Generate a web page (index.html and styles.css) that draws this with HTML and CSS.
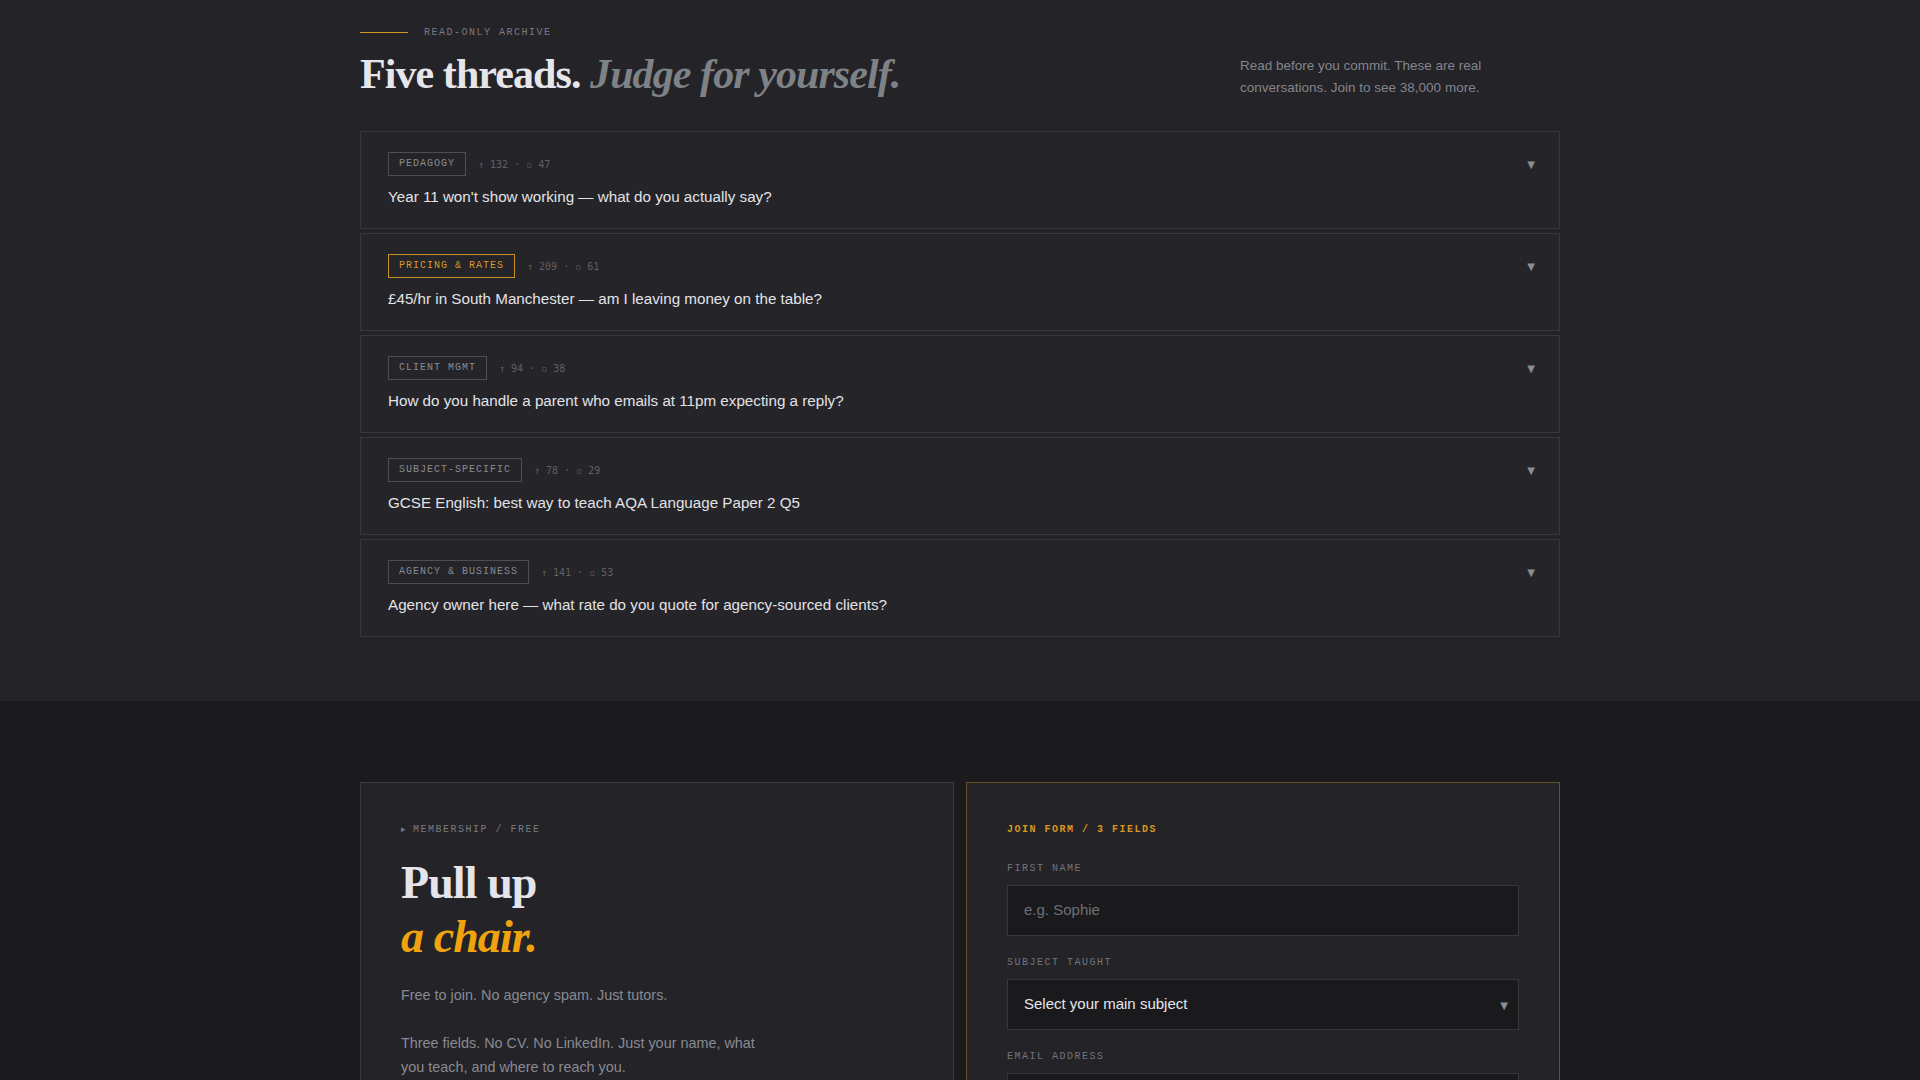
FILE: index.html
```html
<!DOCTYPE html>
<html lang="en">
<head>
<meta charset="utf-8">
<title>Five threads. Judge for yourself.</title>
<link rel="stylesheet" href="styles.css">
</head>
<body>
<section class="archive">
  <div class="wrap">
    <div class="eyebrow"><span class="rule"></span><span>READ-ONLY ARCHIVE</span></div>
    <div class="head">
      <h1 class="display">Five threads. <em>Judge for yourself.</em></h1>
      <p class="lede">Read before you commit. These are real conversations. Join to see 38,000 more.</p>
    </div>
    <div class="threads">
      <article class="thread">
        <div class="thread-top"><span class="tag">PEDAGOGY</span><span class="meta">↑ 132 · ▫ 47</span><span class="chev">▼</span></div>
        <h3 class="thread-title">Year 11 won't show working — what do you actually say?</h3>
      </article>
      <article class="thread">
        <div class="thread-top"><span class="tag tag-hot">PRICING &amp; RATES</span><span class="meta">↑ 209 · ▫ 61</span><span class="chev">▼</span></div>
        <h3 class="thread-title">£45/hr in South Manchester — am I leaving money on the table?</h3>
      </article>
      <article class="thread">
        <div class="thread-top"><span class="tag">CLIENT MGMT</span><span class="meta">↑ 94 · ▫ 38</span><span class="chev">▼</span></div>
        <h3 class="thread-title">How do you handle a parent who emails at 11pm expecting a reply?</h3>
      </article>
      <article class="thread">
        <div class="thread-top"><span class="tag">SUBJECT-SPECIFIC</span><span class="meta">↑ 78 · ▫ 29</span><span class="chev">▼</span></div>
        <h3 class="thread-title">GCSE English: best way to teach AQA Language Paper 2 Q5</h3>
      </article>
      <article class="thread">
        <div class="thread-top"><span class="tag">AGENCY &amp; BUSINESS</span><span class="meta">↑ 141 · ▫ 53</span><span class="chev">▼</span></div>
        <h3 class="thread-title">Agency owner here — what rate do you quote for agency-sourced clients?</h3>
      </article>
    </div>
  </div>
</section>

<section class="join">
  <div class="wrap join-grid">
    <div class="card pitch">
      <div class="card-eyebrow"><span class="tri">▸</span> MEMBERSHIP / FREE</div>
      <h2 class="pitch-title">Pull up<br><em>a chair.</em></h2>
      <p class="pitch-text">Free to join. No agency spam. Just tutors.</p>
      <p class="pitch-text">Three fields. No CV. No LinkedIn. Just your name, what you teach, and where to reach you.</p>
    </div>
    <form class="card form" action="#">
      <div class="card-eyebrow form-eyebrow">JOIN FORM / 3 FIELDS</div>
      <div class="field">
        <label class="label" for="fname">FIRST NAME</label>
        <input class="input" id="fname" type="text" placeholder="e.g. Sophie">
      </div>
      <div class="field">
        <label class="label" for="subject">SUBJECT TAUGHT</label>
        <div class="select-wrap">
          <select class="input select" id="subject">
            <option>Select your main subject</option>
            <option>Maths</option>
            <option>English</option>
            <option>Science</option>
          </select>
        </div>
      </div>
      <div class="field">
        <label class="label" for="email">EMAIL ADDRESS</label>
        <input class="input" id="email" type="email" placeholder="you@example.com">
      </div>
      <button class="submit" type="button">JOIN THE STAFFROOM →</button>
    </form>
  </div>
</section>
</body>
</html>
```

FILE: styles.css
```css
* { box-sizing: border-box; }

html, body {
  margin: 0;
  padding: 0;
}

body {
  background: #1b1b1e;
  color: #e4e4e8;
  font-family: "Liberation Sans", Arial, sans-serif;
}

.wrap {
  width: 1200px;
  margin: 0 auto;
}

/* ---------- archive ---------- */
.archive {
  background: #232328;
  padding: 24px 0 64px;
}

.eyebrow {
  display: flex;
  align-items: center;
  gap: 16px;
  height: 16px;
  font-family: "Liberation Mono", monospace;
  font-size: 10px;
  letter-spacing: 0.15em;
  color: #7a7a80;
}

.rule {
  display: block;
  width: 48px;
  height: 1px;
  background: #d9981f;
}

.head {
  display: flex;
  justify-content: space-between;
  align-items: flex-end;
  margin: 11px 0 34px;
}

.display {
  margin: 0;
  font-family: "Liberation Serif", "Times New Roman", serif;
  font-weight: 700;
  font-size: 42px;
  line-height: 1.1;
  letter-spacing: -0.022em;
  color: #e6e6ea;
}

.display em {
  font-style: italic;
  font-weight: 700;
  color: #7e8286;
}

.lede {
  margin: 0 0 -2px;
  width: 320px;
  font-size: 13.5px;
  line-height: 22px;
  color: #85858b;
}

.threads {
  display: flex;
  flex-direction: column;
  gap: 4px;
}

.thread {
  background: #242429;
  border: 1px solid #36363b;
  padding: 20px 24px 20px 27px;
}

.thread-top {
  display: flex;
  align-items: center;
  gap: 12px;
}

.tag {
  display: inline-block;
  height: 24px;
  line-height: 22px;
  padding: 0 10px;
  border: 1px solid #4e4e54;
  font-family: "Liberation Mono", monospace;
  font-size: 10px;
  letter-spacing: 0.1em;
  color: #8a8a90;
}

.tag-hot {
  border-color: #c98d25;
  color: #d9982a;
}

.meta {
  font-family: "DejaVu Sans Mono", "Liberation Mono", monospace;
  font-size: 10px;
  color: #606066;
}

.chev {
  margin-left: auto;
  font-family: "DejaVu Sans", sans-serif;
  font-size: 10px;
  color: #8c8c92;
}

.thread-title {
  margin: 10px 0 0;
  font-weight: 400;
  font-size: 15.2px;
  line-height: 22px;
  color: #e2e2e6;
}

/* ---------- join ---------- */
.join {
  background: #1b1b1e;
  padding: 81px 0 80px;
}

.join-grid {
  display: grid;
  grid-template-columns: 1fr 1fr;
  gap: 12px;
}

.card {
  background: #232328;
  border: 1px solid #3a3a3f;
  padding: 40px;
}

.form {
  border-color: #66502a;
}

.card-eyebrow {
  font-family: "Liberation Mono", monospace;
  font-size: 10px;
  line-height: 13px;
  letter-spacing: 0.15em;
  color: #7a7a80;
}

.tri {
  font-family: "DejaVu Sans", sans-serif;
  font-size: 9px;
  letter-spacing: 0;
}

.form-eyebrow {
  color: #d9961f;
  font-weight: 700;
  margin-bottom: 26px;
}

.pitch-title {
  margin: 20px 0 19px;
  font-family: "Liberation Serif", "Times New Roman", serif;
  font-weight: 700;
  font-size: 46px;
  line-height: 54px;
  letter-spacing: -0.02em;
  color: #e4e4ea;
}

.pitch-title em {
  font-style: italic;
  color: #f0a30f;
}

.pitch-text {
  margin: 0 0 24px;
  max-width: 370px;
  font-size: 14.4px;
  line-height: 24px;
  color: #8a8a91;
}

.field {
  margin-bottom: 20px;
}

.label {
  display: block;
  margin-bottom: 10px;
  font-family: "Liberation Mono", monospace;
  font-size: 10px;
  line-height: 13px;
  letter-spacing: 0.15em;
  color: #74747a;
}

.input {
  display: block;
  width: 100%;
  height: 51px;
  padding: 0 16px 3px;
  background: #1a1a1d;
  border: 1px solid #35353a;
  border-radius: 0;
  font-family: "Liberation Sans", Arial, sans-serif;
  font-size: 15px;
  color: #e6e6ea;
  outline: none;
}

.input::placeholder {
  color: #6f6f75;
}

.select-wrap {
  position: relative;
}

.select {
  appearance: none;
  -webkit-appearance: none;
  padding-right: 36px;
}

.select-wrap::after {
  content: "▼";
  position: absolute;
  right: 11px;
  top: 50%;
  transform: translateY(-50%);
  font-family: "DejaVu Sans", sans-serif;
  font-size: 10px;
  color: #8c8c92;
  pointer-events: none;
}

.submit {
  display: block;
  width: 100%;
  height: 50px;
  margin-top: 8px;
  background: #e8a317;
  border: none;
  font-family: "Liberation Mono", monospace;
  font-weight: 700;
  font-size: 12px;
  letter-spacing: 0.15em;
  color: #1b1b1e;
}
```
